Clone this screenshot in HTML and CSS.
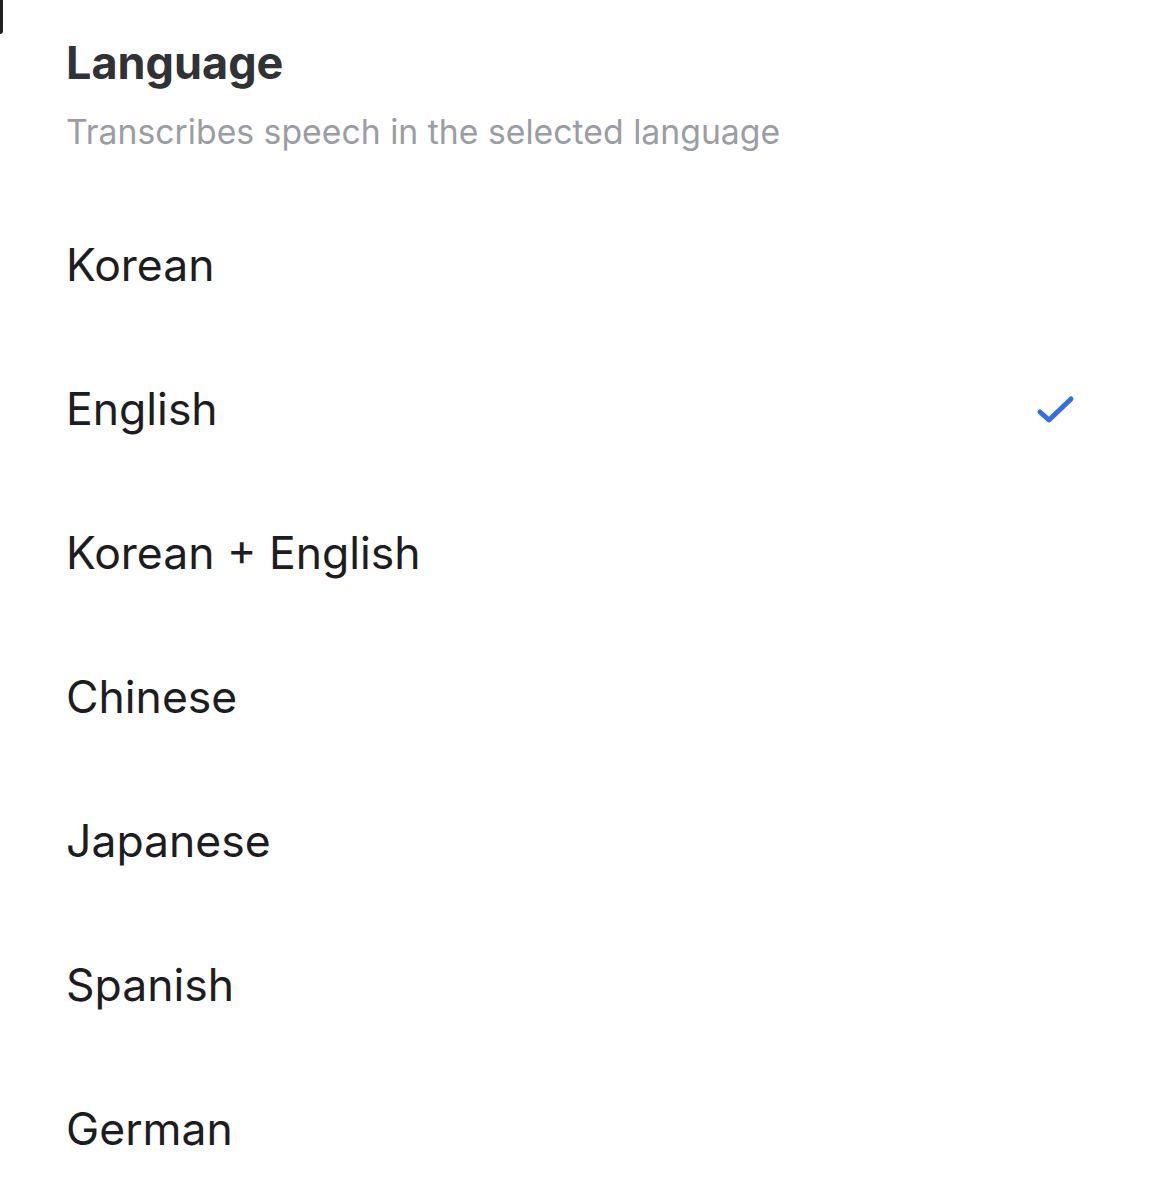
FILE: index.html
```html
<!DOCTYPE html>
<html lang="en">
<head>
    <meta charset="UTF-8">
    <meta name="viewport" content="width=device-width, initial-scale=1.0">
    <title>Language</title>
    <link rel="stylesheet" href="styles.css">
</head>
<body>
    <div class="edge"></div>
    <div class="sheet">
        <div class="sheet-header">
            <h2>Language</h2>
            <p class="hint">Transcribes speech in the selected language</p>
        </div>
        <ul class="lang-list">
            <li class="lang-item">Korean</li>
            <li class="lang-item selected">English
                <svg class="check" width="40" height="32" viewBox="0 0 40 32">
                    <path d="M5 19 L14 27 L36 6" fill="none" stroke="#2f6fe8" stroke-width="5" stroke-linecap="round" stroke-linejoin="round"/>
                </svg>
            </li>
            <li class="lang-item">Korean + English</li>
            <li class="lang-item">Chinese</li>
            <li class="lang-item">Japanese</li>
            <li class="lang-item">Spanish</li>
            <li class="lang-item">German</li>
        </ul>
    </div>
</body>
</html>
```

FILE: styles.css
```css
body {
    margin: 0;
    background: #fff;
    font-family: Inter, "Noto Sans", sans-serif;
}
.edge {
    position: absolute;
    left: 0;
    top: 0;
    width: 3px;
    height: 34px;
    background: #222;
    border-bottom-right-radius: 3px;
}
.sheet {
    padding: 0 100px 0 66px;
}
.sheet-header {
    padding-top: 35px;
    height: 193px;
    box-sizing: border-box;
}
.sheet-header h2 {
    margin: 0;
    font-size: 45px;
    font-weight: 700;
    line-height: 56px;
    color: #303236;
}
.hint {
    margin: 19px 0 0;
    font-size: 33.75px;
    line-height: 44px;
    color: #9b9da4;
}
.lang-list {
    list-style: none;
    margin: 0;
    padding: 0;
}
.lang-item {
    height: 144px;
    display: flex;
    align-items: center;
    justify-content: space-between;
    font-size: 44.5px;
    color: #1d1d1f;
}
.check {
    display: block;
}
```
